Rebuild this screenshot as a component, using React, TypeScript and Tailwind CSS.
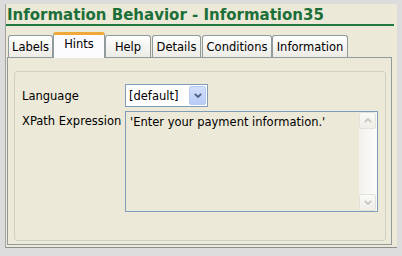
import React from 'react';

const tabs = [
  { label: 'Labels', cls: 'w-[45px] ml-0' },
  { label: 'Hints', cls: 'w-[52px] ml-0', active: true },
  { label: 'Help', cls: 'w-[46px] ml-0' },
  { label: 'Details', cls: 'w-[49px] ml-[1px]' },
  { label: 'Conditions', cls: 'w-[70px] ml-[1px]' },
  { label: 'Information', cls: 'w-[76px] ml-0' },
];

function Chevron({ up, className }: { up?: boolean; className?: string }) {
  return (
    <svg width="8" height="5" viewBox="0 0 8 5" className={className}>
      <path
        d={up ? 'M0.8 4.2 L4 1 L7.2 4.2' : 'M0.8 0.8 L4 4 L7.2 0.8'}
        fill="none"
        stroke="currentColor"
        strokeWidth="1.8"
      />
    </svg>
  );
}

function ScrollButton({ up }: { up?: boolean }) {
  return (
    <div className="w-[17px] h-[17px] flex items-center justify-center rounded-[2px] border border-[#e2e1da] bg-linear-to-b from-[#f9f9f6] to-[#efeee8] text-[#c9c8c0]">
      <Chevron up={up} />
    </div>
  );
}

export default function App() {
  return (
    <div className="w-[402px] h-[256px] bg-[#dcdcdc] pt-[4px] pl-[5px] pr-[5px] pb-[8px] font-['DejaVu_Sans',sans-serif] text-black">
      <div className="h-[244px] flex flex-col bg-[#ece9d8] border-l border-b border-l-[#a4a4a4] border-b-[#8e8e8e]">
        <div className="pt-[2px] pl-[1px] text-[15px] leading-[18px] font-bold text-[#1c6f38] whitespace-nowrap">
          Information Behavior - Information35
        </div>
        <div className="h-[2px] mr-[3px] bg-[#1f7a3f]" />

        <div className="mt-[6px] ml-[2px] h-[25px] flex items-end">
          {tabs.map((t) =>
            t.active ? (
              <div
                key={t.label}
                className={`${t.cls} relative z-10 -mb-[1px] h-[26px] flex justify-center pt-[2px] text-[11.5px] leading-[14px] bg-[#fcfcfe] border-x border-x-[#919b9c] border-t-[3px] border-t-[#f0a838] rounded-t-[3px]`}
              >
                {t.label}
              </div>
            ) : (
              <div
                key={t.label}
                className={`${t.cls} h-[22px] flex items-center justify-center text-[11.5px] leading-[14px] border border-b-0 border-[#919b9c] rounded-t-[3px] bg-linear-to-b from-white to-[#ecebe5]`}
              >
                {t.label}
              </div>
            )
          )}
        </div>

        <div className="h-[188px] ml-[1px] mr-[5px] border border-[#919b9c] flex flex-col pt-[13px] pl-[6px] pr-[5px] pb-[3px]">
          <div className="flex-1 border border-[#d0d0bf] rounded-[3px] pt-[12px] pl-[7px] text-[11.5px] leading-[14px]">
            <div className="flex items-center">
              <div className="w-[103px]">Language</div>
              <div className="w-[83px] h-[23px] border border-[#7f9db9] bg-white flex items-center p-[1px]">
                <span className="flex-1 pl-[2px]">[default]</span>
                <div className="w-[17px] h-full rounded-[2px] border border-[#b7cbf5] bg-linear-to-b from-[#d3e0fb] to-[#b6cbf6] flex items-center justify-center text-[#4d6185]">
                  <Chevron />
                </div>
              </div>
            </div>

            <div className="flex items-start mt-[4px]">
              <div className="w-[103px] pt-[3px]">XPath Expression</div>
              <div className="w-[253px] h-[101px] border border-[#7f9db9] flex">
                <div className="flex-1 pl-[4px] pt-[3px] whitespace-nowrap">
                  'Enter your payment information.'
                </div>
                <div className="w-[18px] flex flex-col justify-between pr-[1px] bg-linear-to-r from-[#f3f1ec] to-[#fdfdfc]">
                  <ScrollButton up />
                  <ScrollButton />
                </div>
              </div>
            </div>
          </div>
        </div>
      </div>
    </div>
  );
}
